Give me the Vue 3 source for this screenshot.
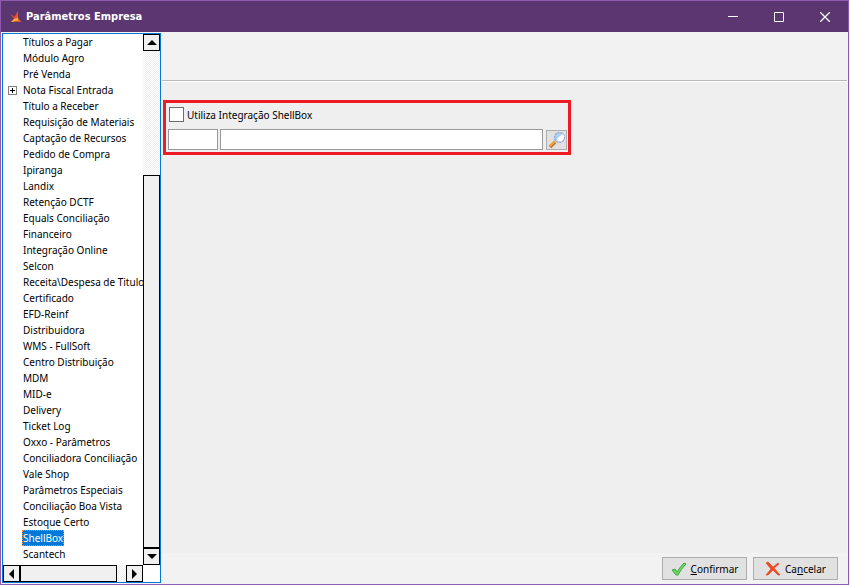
<template>
  <div class="desktop">
    <div class="window">
      <header class="title-bar">
        <svg class="logo" width="12" height="12" viewBox="0 0 12 12" aria-hidden="true">
          <path d="M1 11L4 8L1 3.500L5 6L8 0L8 5L8 7L11 11L6 10.500Z" fill="#f4701f" />
          <path d="M8 0L4.500 6.500L6 8L8 5Z" fill="#f0502a" />
          <path d="M4 8L7.500 7L8 9.500L1 11Z" fill="#ffb02e" />
          <path d="M1 3.500L5 6L4 8Z" fill="#d9362b" />
        </svg>
        <h1>Parâmetros Empresa</h1>
        <div class="window-buttons">
          <button type="button" aria-label="Minimizar">
            <svg width="10" height="10" viewBox="0 0 10 10"><path d="M0 4.500H10" /></svg>
          </button>
          <button type="button" aria-label="Maximizar">
            <svg width="10" height="10" viewBox="0 0 10 10"><path d="M.5 .5H9.500V9.500H.5Z" /></svg>
          </button>
          <button type="button" aria-label="Fechar">
            <svg width="10" height="10" viewBox="0 0 10 10"><path d="M0 0L10 10M10 0L0 10" stroke-width="1.300" /></svg>
          </button>
        </div>
      </header>

      <div class="body">
        <nav class="tree" aria-label="Parâmetros">
          <div class="tree-view">
            <ul>
              <li v-for="item in items" :key="item">
                <span v-if="item === 'Nota Fiscal Entrada'" class="expander"></span>
                <a href="#" :class="{ selected: item === selected }" @click.prevent="selected = item">{{ item }}</a>
              </li>
            </ul>
            <div class="scroll vertical">
              <button type="button" aria-label="Rolar para cima">
                <svg width="10" height="5" viewBox="0 0 10 5"><path d="M5 0L10 5H0Z" /></svg>
              </button>
              <div class="track"></div>
              <div class="thumb"></div>
              <button type="button" aria-label="Rolar para baixo">
                <svg width="10" height="5" viewBox="0 0 10 5"><path d="M0 0H10L5 5Z" /></svg>
              </button>
            </div>
          </div>
          <div class="scroll horizontal">
            <button type="button" aria-label="Rolar para a esquerda">
              <svg width="5" height="10" viewBox="0 0 5 10"><path d="M5 0V10L0 5Z" /></svg>
            </button>
            <div class="thumb"></div>
            <div class="track"></div>
            <button type="button" aria-label="Rolar para a direita">
              <svg width="5" height="10" viewBox="0 0 5 10"><path d="M0 0L5 5L0 10Z" /></svg>
            </button>
          </div>
        </nav>

        <main class="panel">
          <div class="panel-header"></div>
          <div class="panel-content">
            <section class="highlight">
              <label class="check">
                <input v-model="enabled" type="checkbox" />
                Utiliza Integração ShellBox
              </label>
              <div class="fields">
                <input v-model="code" class="code" type="text" aria-label="Código" />
                <input v-model="description" class="description" type="text" aria-label="Descrição" />
                <button type="button" class="search" aria-label="Pesquisar">
                  <svg width="18" height="18" viewBox="0 0 18 18">
                    <path d="M2 16L7 11" stroke="#b8743a" stroke-width="3.500" />
                    <path d="M2 15L7 10" stroke="#f5a83a" stroke-width="2" />
                    <circle cx="11.500" cy="6.500" r="5" fill="#a9d2fa" stroke="#93a3cf" stroke-width="1.200" stroke-dasharray="2 1" />
                    <path d="M9 9Q9 7 12 5L15 3Q17 6 15 9Q12 12 9 9Z" fill="#fff" />
                  </svg>
                </button>
              </div>
            </section>
          </div>
          <footer class="actions">
            <button type="button">
              <svg width="16" height="16" viewBox="0 0 16 16">
                <path d="M1 9L4 8L6 11Q9 6 13 2L15 3Q10 8 7 14H5Z" fill="#6bdc62" stroke="#3fa545" />
              </svg>
              <span><u>C</u>onfirmar</span>
            </button>
            <button type="button">
              <svg width="16" height="16" viewBox="0 0 16 16">
                <path d="M1 2L3 1L8 6L13 2L14 3L9 7L15 14L13 14L8 9L3 14L1 14L6 8Z" fill="#f5461c" stroke="#e23a14" stroke-width=".6" />
              </svg>
              <span>Ca<u>n</u>celar</span>
            </button>
          </footer>
        </main>
      </div>
    </div>
  </div>
</template>

<script setup>
import { ref } from 'vue'

const items = [
  'Títulos a Pagar',
  'Módulo Agro',
  'Pré Venda',
  'Nota Fiscal Entrada',
  'Título a Receber',
  'Requisição de Materiais',
  'Captação de Recursos',
  'Pedido de Compra',
  'Ipiranga',
  'Landix',
  'Retenção DCTF',
  'Equals Conciliação',
  'Financeiro',
  'Integração Online',
  'Selcon',
  'Receita\\Despesa de Titulos',
  'Certificado',
  'EFD-Reinf',
  'Distribuidora',
  'WMS - FullSoft',
  'Centro Distribuição',
  'MDM',
  'MID-e',
  'Delivery',
  'Ticket Log',
  'Oxxo - Parâmetros',
  'Conciliadora Conciliação',
  'Vale Shop',
  'Parâmetros Especiais',
  'Conciliação Boa Vista',
  'Estoque Certo',
  'ShellBox',
  'Scantech'
]

const selected = ref('ShellBox')
const enabled = ref(false)
const code = ref('')
const description = ref('')
</script>

<style>
body {
  margin: 0;
  background: #f4f1f6;
}
</style>

<style scoped>
* {
  box-sizing: border-box;
}

.desktop {
  min-height: 100vh;
  padding-right: 1px;
  display: flex;
  font: 10px/16px "Noto Sans", sans-serif;
  color: #000;
}

button,
input {
  font: inherit;
  color: inherit;
  margin: 0;
  padding: 0;
  border-radius: 0;
}

.window {
  flex: 1;
  min-width: 0;
  display: flex;
  flex-direction: column;
  border: 1px solid #8e5bb0;
  background: #f2f2f2;
}

.title-bar {
  display: flex;
  align-items: center;
  height: 31px;
  padding-left: 9px;
  background: #5b3671;
  color: #fff;
}

h1 {
  flex: 1;
  margin: 0 0 0 4px;
  font: bold 11px/16px "DejaVu Sans Condensed", sans-serif;
}

.window-buttons {
  display: flex;
}

.window-buttons button {
  display: flex;
  align-items: center;
  justify-content: center;
  width: 46px;
  height: 30px;
  border: none;
  background: none;
}

.window-buttons path {
  fill: none;
  stroke: #fff;
}

.body {
  flex: 1;
  display: flex;
  padding: 1px;
}

.tree {
  display: flex;
  flex-direction: column;
  width: 159px;
  flex: none;
  border: 1px solid #0078d7;
  background: #fff;
}

.tree-view {
  flex: 1;
  display: flex;
}

ul {
  flex: 1;
  min-width: 0;
  margin: 0;
  padding: 0;
  list-style: none;
  overflow: hidden;
}

li {
  position: relative;
  height: 16px;
  padding-left: 19px;
  white-space: nowrap;
}

a {
  display: inline-block;
  height: 16px;
  padding: 0 1px;
  line-height: 16px;
  color: #000;
  text-decoration: none;
}

.selected {
  background: #0078d7;
  color: #fff;
  outline: 1px dotted #ff8728;
  outline-offset: -1px;
}

.expander {
  position: absolute;
  left: 5px;
  top: 4px;
  width: 9px;
  height: 9px;
  border: 1px solid #808080;
  background:
    linear-gradient(#000, #000) center / 5px 1px no-repeat,
    linear-gradient(#000, #000) center / 1px 5px no-repeat;
}

.scroll {
  display: flex;
  background: repeating-conic-gradient(#fff 0 25%, #efefef 0 50%) 0 0 / 2px 2px;
}

.vertical {
  flex-direction: column;
  width: 17px;
}

.horizontal {
  height: 17px;
  margin-right: 17px;
}

.scroll button {
  display: flex;
  align-items: center;
  justify-content: center;
  flex: none;
  width: 17px;
  height: 17px;
  border: 1px solid #000;
  background: #f0f0f0;
}

.scroll .thumb {
  border: 1px solid #000;
  background: #f0f0f0;
}

.vertical .track {
  flex: 1;
}

.vertical .thumb {
  flex: 3;
}

.horizontal .thumb {
  flex: 10;
}

.horizontal .track {
  flex: 1;
}

.panel {
  flex: 1;
  min-width: 0;
  display: flex;
  flex-direction: column;
  padding-left: 1px;
}

.panel-header {
  height: 47px;
}

.panel-content {
  flex: 1;
  padding: 19px 1px 0;
  border-top: 1px solid #b8b8b8;
  box-shadow: inset 0 1px #fff;
  background: #efefef;
}

.highlight {
  max-width: 408px;
  height: 55px;
  padding: 3px 1px 0 2px;
  border: 3px solid #ed1c24;
}

.check {
  display: flex;
  align-items: center;
  gap: 3px;
  width: max-content;
  padding-left: 1px;
  height: 17px;
}

.check input {
  appearance: none;
  width: 15px;
  height: 15px;
  border: 1px solid #6e6e6e;
  background: #fff;
}

.check input:checked {
  background: #0078d7;
}

.fields {
  display: flex;
  align-items: center;
  gap: 2px;
  margin-top: 6px;
}

.fields input {
  height: 21px;
  padding: 0 3px;
  border: 1px solid #999;
  background: #fff;
}

.code {
  width: 50px;
}

.description {
  flex: 1;
  min-width: 0;
}

.search {
  display: flex;
  align-items: center;
  justify-content: center;
  width: 21px;
  height: 20px;
  margin-left: 1px;
  border: 1px solid #adadad;
  background: #e1e1e1;
}

.actions {
  display: flex;
  justify-content: flex-end;
  gap: 6px;
  padding: 4px 9px 3px;
}

.actions button {
  display: flex;
  align-items: center;
  justify-content: center;
  gap: 4px;
  width: 85px;
  height: 23px;
  border: 1px solid #adadad;
  background: #e1e1e1;
}
</style>
